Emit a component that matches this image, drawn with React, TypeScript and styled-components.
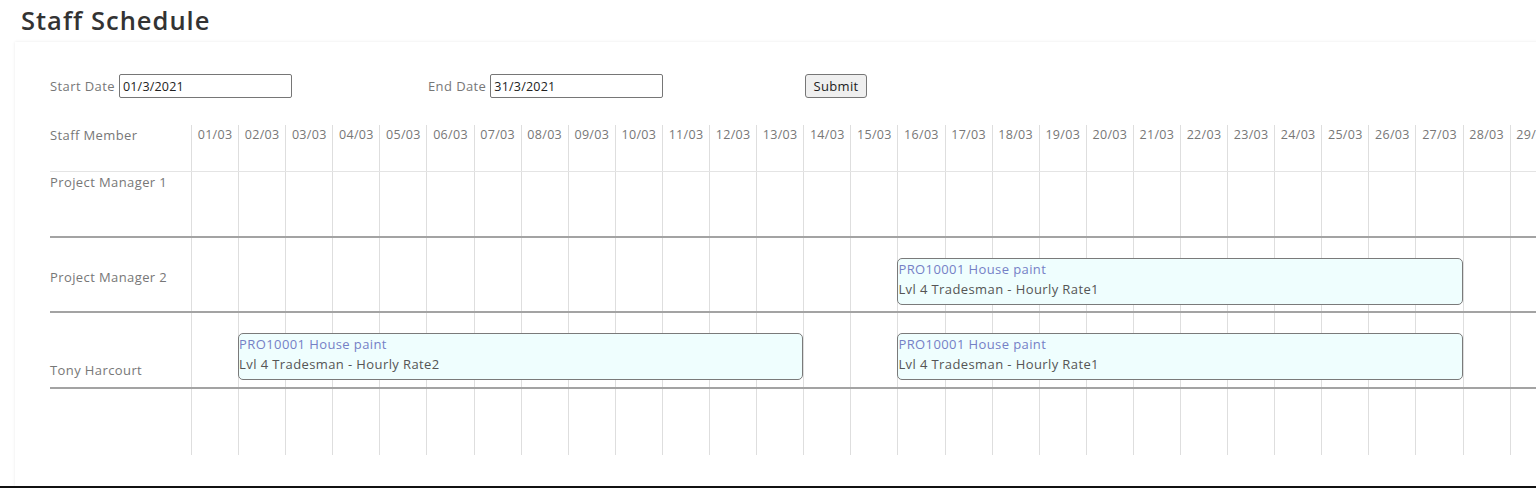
import React from "react";
import styled, { createGlobalStyle } from "styled-components";

const FONT = `"Open Sans", "Liberation Sans", sans-serif`;
const COL_W = 47.1;
const NAME_W = 141;
const DAYS = 31;

const Global = createGlobalStyle`
  html, body { margin: 0; padding: 0; background: #fff; }
  body { font-family: ${FONT}; overflow: hidden; }
  * { box-sizing: border-box; }
`;

const Page = styled.div`
  height: 488px;
  overflow: hidden;
  border-bottom: 2px solid #111;
  display: flex;
  flex-direction: column;
`;

const Title = styled.h1`
  margin: 5px 0 0 21px;
  font-size: 25.5px;
  line-height: 31px;
  font-weight: 600;
  color: #333;
  letter-spacing: 1px;
`;

const Card = styled.div`
  flex: 1;
  margin: 6px -20px 0 15px;
  padding: 32px 0 0 35px;
  background: #fff;
  box-shadow: 0 0 3px rgba(0, 0, 0, 0.09);
  overflow: hidden;
`;

const FormRow = styled.div`
  display: grid;
  grid-template-columns: 378px 377px auto;
  height: 24px;
  align-items: center;
`;

const Field = styled.label`
  display: flex;
  align-items: center;
  gap: 4px;
  font-size: 13px;
  letter-spacing: 0.4px;
  color: #777;
`;

const Input = styled.input`
  width: 173px;
  height: 24px;
  padding: 0 3px;
  border: 1px solid #767676;
  border-radius: 2px;
  font-family: ${FONT};
  font-size: 12.5px;
  letter-spacing: 0.2px;
  color: #222;
  outline: none;
`;

const SubmitButton = styled.button`
  justify-self: start;
  width: 62px;
  height: 24px;
  padding: 0;
  background: #efefef;
  border: 1px solid #767676;
  border-radius: 3px;
  font-family: ${FONT};
  font-size: 13px;
  letter-spacing: 0.3px;
  color: #222;
`;

const Schedule = styled.div`
  margin-top: 27px;
  width: ${NAME_W + DAYS * COL_W}px;
`;

const Row = styled.div<{ $h: number; $line: string }>`
  display: grid;
  grid-template-columns: ${NAME_W}px repeat(${DAYS}, ${COL_W}px);
  grid-template-rows: ${(p) => p.$h}px;
  border-bottom: ${(p) => p.$line};
`;

const NameCell = styled.div<{ $top: number }>`
  grid-row: 1;
  grid-column: 1;
  padding-top: ${(p) => p.$top}px;
  font-size: 13px;
  letter-spacing: 0.4px;
  line-height: 20px;
  color: #777;
`;

const DayCell = styled.div<{ $col: number }>`
  grid-row: 1;
  grid-column: ${(p) => p.$col};
  border-left: 1px solid #dedede;
`;

const DayHead = styled(DayCell)`
  text-align: center;
  font-size: 12.5px;
  letter-spacing: 0.3px;
  line-height: 20px;
  color: #777;
  white-space: nowrap;
  overflow: visible;
`;

const Bar = styled.div<{ $start: number; $span: number }>`
  grid-row: 1;
  grid-column: ${(p) => p.$start} / span ${(p) => p.$span};
  align-self: start;
  margin-top: 20px;
  height: 47px;
  background: #effefe;
  border: 1px solid #7a7a7a;
  border-radius: 5px;
  z-index: 1;
  font-size: 13px;
  letter-spacing: 0.4px;
  line-height: 20px;
  white-space: nowrap;
`;

const BarProject = styled.div`
  color: #7580c6;
`;

const BarRole = styled.div`
  color: #555;
`;

type Booking = { day: number; len: number; rate: string };
type Staff = { name: string; h: number; top: number; bookings: Booking[] };

const staff: Staff[] = [
  { name: "Project Manager 1", h: 64, top: 0, bookings: [] },
  {
    name: "Project Manager 2",
    h: 73,
    top: 29,
    bookings: [{ day: 16, len: 12, rate: "Hourly Rate1" }],
  },
  {
    name: "Tony Harcourt",
    h: 74,
    top: 47,
    bookings: [
      { day: 2, len: 12, rate: "Hourly Rate2" },
      { day: 16, len: 12, rate: "Hourly Rate1" },
    ],
  },
];

const days = Array.from({ length: DAYS }, (_, i) => i + 1);
const pad = (n: number) => (n < 10 ? `0${n}` : `${n}`);

const DayCells = () => (
  <>
    {days.map((d) => (
      <DayCell key={d} $col={d + 1} />
    ))}
  </>
);

export default function App() {
  return (
    <>
      <Global />
      <Page>
        <Title>Staff Schedule</Title>
        <Card>
          <FormRow>
            <Field>
              Start Date
              <Input defaultValue="01/3/2021" />
            </Field>
            <Field>
              End Date
              <Input defaultValue="31/3/2021" />
            </Field>
            <SubmitButton>Submit</SubmitButton>
          </FormRow>
          <Schedule>
            <Row $h={46} $line="1px solid #e4e4e4">
              <NameCell $top={0}>Staff Member</NameCell>
              {days.map((d) => (
                <DayHead key={d} $col={d + 1}>
                  {pad(d)}/03
                </DayHead>
              ))}
            </Row>
            {staff.map((s) => (
              <Row key={s.name} $h={s.h} $line="2px solid #a3a3a3">
                <NameCell $top={s.top}>{s.name}</NameCell>
                <DayCells />
                {s.bookings.map((b, i) => (
                  <Bar key={i} $start={b.day + 1} $span={b.len}>
                    <BarProject>PRO10001 House paint</BarProject>
                    <BarRole>Lvl 4 Tradesman - {b.rate}</BarRole>
                  </Bar>
                ))}
              </Row>
            ))}
            <Row $h={66} $line="none">
              <NameCell $top={0} />
              <DayCells />
            </Row>
          </Schedule>
        </Card>
      </Page>
    </>
  );
}
